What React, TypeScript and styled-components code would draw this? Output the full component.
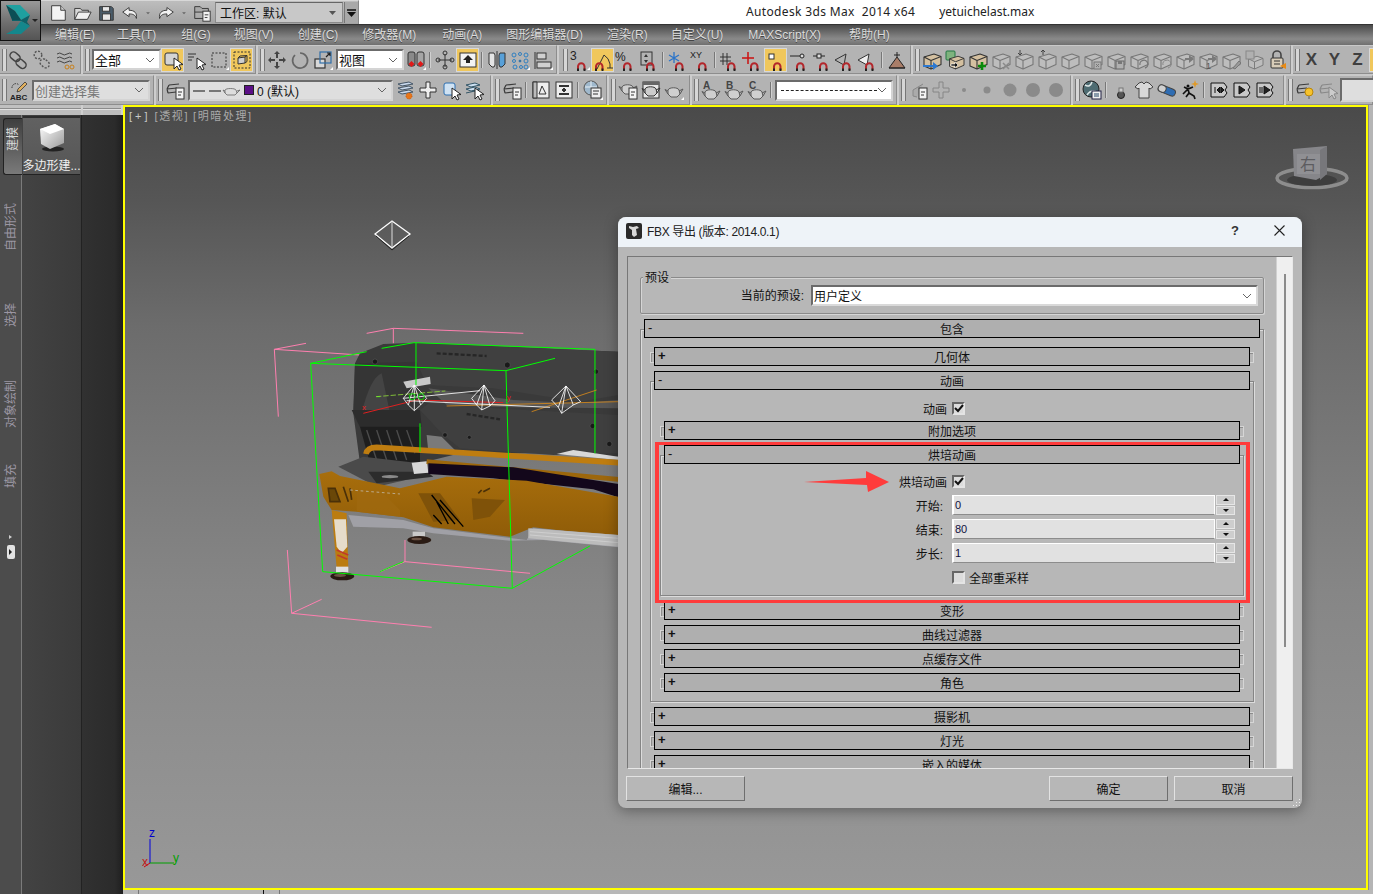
import React from 'react';
import styled, { createGlobalStyle } from 'styled-components';

const Global = createGlobalStyle`
  html, body { margin: 0; padding: 0; background: #fff; overflow: hidden; }
  * { box-sizing: border-box; }
  body { font-family: "Liberation Sans", "Noto Sans CJK SC", sans-serif; font-size: 12px; color: #111; }
`;

/* ---------- shell ---------- */
const Page = styled.div`
  position: relative; width: 1373px; height: 894px; overflow: hidden;
  display: flex; flex-direction: column; background: #c9c9c9;
`;
const TitleRow = styled.div`
  height: 24px; display: flex; align-items: flex-start; background: #fff; padding-left: 41px; flex: none;
`;
const Quick = styled.div`
  width: 318px; height: 24px; display: flex; align-items: center; padding-left: 5px;
  background: linear-gradient(#bdbdbd, #a3a3a3); border-top: 1px solid #d8d8d8; border-right: 1px solid #888;
`;
const QIcon = styled.span<{ $w?: number }>`
  width: ${p => p.$w ?? 24}px; height: 22px; display: flex; align-items: center; justify-content: center; flex: none;
`;
const WorkCombo = styled.div`
  width: 129px; height: 21px; margin-left: 1px; padding: 0 6px 0 4px; display: flex; align-items: center; justify-content: space-between;
  background: #c8c8c8; border: 1px solid #8a8a8a; border-top-color: #666; font-size: 12px; color: #111;
`;
const WorkMore = styled.div`
  width: 14px; height: 21px; margin-left: 1px; display: flex; flex-direction: column; align-items: center; justify-content: center; gap: 1px;
  background: #a9a9a9; border-left: 1px solid #777;
`;
const AppTitle = styled.div`
  margin-left: 387px; height: 24px; line-height: 24px; font-family: "Noto Sans", "Liberation Sans", sans-serif; font-size: 12px;
  color: #222; white-space: pre; letter-spacing: .35px;
`;
const FileTitle = styled(AppTitle)`
  margin-left: 24px; letter-spacing: 0;
`;
const AppButton = styled.div`
  position: absolute; left: 0; top: 0; width: 41px; height: 41px; border: 1px solid #111; z-index: 3;
  background: linear-gradient(#999, #6f6f6f 55%, #545454);
`;
const MenuBar = styled.div`
  height: 21px; flex: none; display: flex; align-items: center; padding-left: 55px;
  background: linear-gradient(#4a4a4a, #7d7d7d 55%, #8a8a8a 70%, #6f6f6f);
  border-top: 1px solid #333;
`;
const MenuItem = styled.span<{ $gap: number }>`
  margin-right: ${p => p.$gap}px; color: #dcdcdc; font-size: 12px; line-height: 20px; white-space: nowrap; text-shadow: 0 1px 0 #444;
`;
const ToolRow = styled.div<{ $h: number }>`
  height: ${p => p.$h}px; flex: none; display: flex; gap: 2px; background: #cdcdcd; overflow: hidden;
  margin-bottom: ${p => (p.$h === 29 ? 1 : 0)}px;
`;
const Group = styled.div<{ $w: number; $pad?: number }>`
  width: ${p => p.$w}px; flex: none; height: 100%; display: flex; align-items: center; padding-left: ${p => p.$pad ?? 0}px;
  background: #b3b3b3; border-right: 1px solid #8d8d8d; border-bottom: 1px solid #8d8d8d; border-top: 1px solid #c9c9c9;
`;
const Grip = styled.span`
  flex: none; width: 5px; height: 22px; margin-left: 2px;
  border-left: 1px solid #777; border-right: 1px solid #777; background: #d6d6d6;
`;
const Cell = styled.span<{ $on?: boolean; $fly?: boolean }>`
  position: relative; flex: none; width: 23px; height: 24px; display: flex; align-items: center; justify-content: center;
  background: ${p => (p.$on ? '#f0c75c' : 'transparent')};
  box-shadow: ${p => (p.$on ? 'inset 0 0 0 1px #d8d8d8' : 'none')};
  &::after {
    content: ''; display: ${p => (p.$fly ? 'block' : 'none')}; position: absolute; right: 1px; bottom: 2px;
    border-left: 3px solid transparent; border-bottom: 3px solid #fff;
  }
`;
const Sep = styled.span`
  flex: none; width: 1px; height: 16px; margin: 0 3px 0 2px; background: #777; box-shadow: 1px 0 0 #d0d0d0;
`;
const Combo = styled.div<{ $w: number; $bg?: string; $ml?: number; $c?: string }>`
  flex: none; width: ${p => p.$w}px; height: 21px; margin-left: ${p => p.$ml ?? 2}px; padding: 0 4px 0 1px; display: flex; align-items: center; justify-content: space-between;
  background: ${p => p.$bg ?? '#fff'}; color: ${p => p.$c ?? '#111'};
  border: 2px solid #d4d4d4; border-top-color: #6b6b6b; border-left-color: #6b6b6b;
  font-size: 13px; white-space: nowrap;
`;
const ComboText = styled.span`
  display: flex; align-items: center; gap: 3px; font-size: 12px;
`;
const ColorChip = styled.i`
  display: block; width: 10px; height: 10px; background: #5b0f86; border: 1px solid #222;
`;
const DashField = styled.span`
  display: block; width: 97px; height: 0; margin-left: 3px; border-top: 1px dashed #222; outline: 0;
`;
const FieldRest = styled.div`
  flex: none; width: 40px; height: 24px; margin-left: 1px; background: #dedede; border: 2px solid #d4d4d4; border-top-color: #6b6b6b; border-left-color: #6b6b6b;
`;
const AxisCell = styled.span`
  flex: none; width: 23px; text-align: center; font-family: "Liberation Sans", sans-serif; font-weight: 700; font-size: 17px; color: #3f3f3f;
`;

/* ---------- body ---------- */
const Body = styled.div`
  flex: 1; min-height: 0; display: flex;
`;
const Dock = styled.div`
  width: 123px; flex: none; display: flex; flex-direction: column; background: #2f2f2f;
`;
const DockTabs = styled.div`
  height: 10px; flex: none; display: flex; gap: 2px; background: #cfcfcf;
`;
const DockTab = styled.span<{ $w: number }>`
  display: block; width: ${p => p.$w}px; background: linear-gradient(#c0c0c0 0 3px, #8c8c8c 3px 4px, #e0e0e0 4px 5px, #bdbdbd 5px);
`;
const DockCols = styled.div`
  flex: 1; display: flex; min-height: 0;
`;
const Rail = styled.div`
  width: 22px; flex: none; padding-top: 3px; display: flex; flex-direction: column; align-items: center;
  background: #4c4c4c; border-right: 1px solid #7b7b7b;
`;
const RailActive = styled.div`
  width: 19px; height: 57px; margin-left: 3px; display: flex; align-items: flex-start; justify-content: center; padding-top: 8px;
  background: linear-gradient(#3f3f3f, #7a7a7a); border: 1px solid #222; border-right: 0; border-radius: 3px 0 0 3px;
`;
const RailLabel = styled.span<{ $top?: number; $on?: boolean }>`
  margin-top: ${p => p.$top ?? 0}px; writing-mode: vertical-rl; text-orientation: sideways; transform: rotate(180deg); font-size: 12px; line-height: 14px; white-space: nowrap;
  color: ${p => (p.$on ? '#d8d8d8' : '#9b96a3')};
`;
const RailArrow = styled.span`
  margin-top: 47px; width: 0; height: 0; border-left: 3px solid #d0d0d0; border-top: 2px solid transparent; border-bottom: 2px solid transparent;
`;
const RailButton = styled.span`
  margin-top: 6px; width: 8px; height: 14px; border-radius: 2px; background: #e2e2e2; display: flex; align-items: center; justify-content: center;
  &::before { content: ''; border-left: 3px solid #222; border-top: 3px solid transparent; border-bottom: 3px solid transparent; }
`;
const Panel = styled.div`
  width: 60px; flex: none; padding: 3px 1px 0 1px; background: linear-gradient(90deg, #434343, #3a3a3a); border-right: 1px solid #222;
`;
const PanelItem = styled.div`
  height: 57px; display: flex; flex-direction: column; align-items: center; justify-content: flex-end; padding-bottom: 1px;
  background: linear-gradient(#616161, #565656); border-bottom: 1px solid #222; box-shadow: 0 -2px 0 #2d2d2d;
  color: #f0f0f0; font-size: 12px; white-space: nowrap; overflow: hidden;
`;
const DockDark = styled.div`
  flex: 1; background: linear-gradient(90deg, #313131, #2b2b2b 80%, #1f1f1f);
`;
const Right = styled.div`
  flex: 1; min-width: 0; display: flex; flex-direction: column;
`;
const ViewRow = styled.div`
  flex: 1; min-height: 0; display: flex;
`;
const Viewport = styled.div`
  position: relative; width: 1245px; height: 785px; flex: none; border: 2px solid #ffff00; overflow: hidden;
  background: linear-gradient(#4a4a4a 0, #565656 12%, #6c6c6c 28%, #868686 62%, #989898 100%);
`;
const Gutter = styled.div`
  flex: 1; background: #b5b5b5; border-left: 1px solid #8a8a8a;
`;
const BottomStrip = styled.div`
  height: 4px; flex: none; display: flex; background: #b8b8b8;
`;
const Tick = styled.span<{ $ml: number; $c: string }>`
  width: 1px; margin-left: ${p => p.$ml}px; background: ${p => p.$c};
`;
const ViewLabel = styled.div`
  position: absolute; left: 4px; top: 1px; display: flex; gap: 4px; color: #a9a9a9; font-size: 11px; line-height: 16px; letter-spacing: 1.6px; white-space: nowrap;
`;
const LabelBright = styled.span`
  color: #c8c8c8; letter-spacing: 3px;
`;
const Scene = styled.svg`
  position: absolute; left: 0; top: 0; display: block;
`;

/* ---------- dialog ---------- */
const Dialog = styled.div`
  position: absolute; left: 493px; top: 110px; width: 684px; height: 591px; border-radius: 8px; overflow: hidden;
  display: flex; flex-direction: column; background: #b7b7b7; box-shadow: 0 3px 14px rgba(0,0,0,.35);
`;
const DlgTitle = styled.div`
  height: 30px; flex: none; display: flex; align-items: center; padding: 0 0 3px 8px; background: #eef3f8; color: #222;
  font-size: 12px;
`;
const DlgTitleText = styled.span`
  margin-left: 5px; flex: 1; letter-spacing: -.35px; font-size: 12px;
`;
const DlgHelp = styled.span`
  font-size: 13px; font-weight: 700; width: 43px; text-align: left; color: #333;
`;
const DlgClose = styled.span`
  width: 28px; display: flex;
`;
const DlgBody = styled.div`
  flex: 1; min-height: 0; padding: 9px 9px 0 9px; display: flex; flex-direction: column;
`;
const Pane = styled.div`
  height: 513px; flex: none; display: flex; border: 1px solid #e8e8e8; border-top-color: #777; border-left-color: #777; overflow: hidden;
`;
const PaneContent = styled.div`
  position: relative; width: 640px; flex: none; padding: 20px 4px 0 12px; overflow: hidden;
`;
const ScrollTrack = styled.div`
  width: 17px; margin-left: 8px; flex: none; padding: 17px 0 0 7px; background: #efefef; border-left: 1px solid #d0d0d0;
`;
const ScrollThumb = styled.div`
  width: 2px; height: 373px; background: #8b8b8b;
`;
const PresetBox = styled.fieldset`
  width: 624px; height: 37px; margin: 0 0 5px 0; padding: 0 5px 0 0; position: relative; display: flex; align-items: flex-start; justify-content: flex-end;
  border: 1px solid #8a8a8a; box-shadow: inset 1px 1px 0 #d5d5d5, 1px 1px 0 #d5d5d5; border-radius: 2px;
`;
const PresetLegend = styled.span`
  position: absolute; left: 2px; top: -7px; padding: 0 2px; background: #b7b7b7; font-size: 12px; line-height: 15px;
`;
const PresetLabel = styled.span`
  font-size: 12px; line-height: 37px; margin-right: 7px;
`;
const PresetCombo = styled.div`
  width: 447px; height: 21px; margin-top: 7px; display: flex; align-items: center; justify-content: space-between; padding: 0 4px 0 1px;
  background: #fff; border: 2px solid #d9d9d9; border-top-color: #6b6b6b; border-left-color: #6b6b6b; font-size: 12px;
`;
const Rollout = styled.div<{ $open?: boolean }>`
  position: relative; padding: 0 4px;
  & + & { margin-top: 5px; }
  &::before {
    content: ''; position: absolute; left: 0; right: 0;
    top: ${p => (p.$open ? 10 : 5)}px; bottom: ${p => (p.$open ? 0 : 3)}px;
    border: 1px solid ${p => (p.$open ? '#858585' : '#d6d6d6')};
    box-shadow: ${p => (p.$open ? 'inset 1px 1px 0 #dcdcdc, 1px 1px 0 #dcdcdc' : 'inset 1px 1px 0 #8d8d8d')};
  }
`;
const Bar = styled.div`
  position: relative; height: 19px; display: flex; align-items: center; justify-content: center;
  background: #afafaf; border: 1px solid #000; font-size: 12px; color: #111;
`;
const BarSign = styled.span<{ $plus?: boolean }>`
  position: absolute; left: 3px; top: -1px; line-height: 17px; font-size: 13px; font-weight: ${p => (p.$plus ? 700 : 400)};
`;
const RollBody = styled.div<{ $t: number; $b: number }>`
  position: relative; padding: ${p => p.$t}px 6px ${p => p.$b}px 6px;
`;
const FormRow = styled.div<{ $h?: number }>`
  height: ${p => p.$h ?? 24}px; display: flex; align-items: center;
`;
const FormLabel = styled.span<{ $w: number; $gap: number }>`
  width: ${p => p.$w}px; margin-right: ${p => p.$gap}px; text-align: right; font-size: 12px; flex: none; white-space: nowrap;
`;
const Check = styled.span`
  width: 13px; height: 13px; flex: none; display: flex; align-items: center; justify-content: center;
  background: #dcdcdc; border: 2px solid #e4e4e4; border-top-color: #666; border-left-color: #666;
`;
const CheckText = styled.span`
  margin-left: 4px; font-size: 12px;
`;
const SpinField = styled.div`
  width: 263px; height: 20px; flex: none; padding-left: 1px; display: flex; align-items: center; background: #e1e1e1;
  border: 1px solid #fff; border-bottom: 1px solid #8c8c8c; border-left-width: 2px; font-size: 11px; color: #101040;
`;
const Spinner = styled.div`
  width: 19px; height: 20px; flex: none; margin-left: 1px; display: flex; flex-direction: column; gap: 1px;
`;
const SpinBtn = styled.span<{ $down?: boolean }>`
  flex: 1; display: flex; align-items: center; justify-content: center; background: #cdcdcd; border: 1px solid #e6e6e6;
  &::before {
    content: ''; border-left: 3px solid transparent; border-right: 3px solid transparent;
    ${p => (p.$down ? 'border-top: 3px solid #111;' : 'border-bottom: 3px solid #111;')}
  }
`;
const RedBox = styled.div`
  position: absolute; left: -5px; right: -6px; top: -3px; bottom: -7px; border: 3px solid #ff3b3b; border-left-width: 4px; border-right-width: 4px; z-index: 2; pointer-events: none;
`;
const Arrow = styled.svg`
  position: absolute; left: 144px; top: 26px; display: block; z-index: 2;
`;
const DlgFooter = styled.div`
  flex: 1; display: flex; gap: 6px; padding-top: 7px; margin-left: -1px;
`;
const DlgButton = styled.div<{ $push?: boolean }>`
  width: 119px; height: 25px; display: flex; align-items: center; justify-content: center; font-size: 12px;
  margin-left: ${p => (p.$push ? 'auto' : '0')};
  border: 1px solid #6e6e6e; border-top-color: #e2e2e2; border-left-color: #e2e2e2; background: #b7b7b7;
`;
const ResizeGrip = styled.svg`
  position: absolute; right: 1px; bottom: 1px; display: block;
`;

/* ---------- drawings ---------- */
const D = '#3a3a3a';
const Mag = () => (
  <g fill="none">
    <path d="M9 21v-3.500a3.200 3.200 0 0 1 6.500 0V21" stroke="#b3262b" strokeWidth="2" />
    <path d="M9 19.500V22M15.500 19.500V22" stroke="#222" strokeWidth="2" />
  </g>
);
const Cube = ({ f = '#bdbdbd', s = '#777' }: { f?: string; s?: string }) => (
  <g fill={f} stroke={s} strokeWidth="1.100" strokeLinejoin="round">
    <path d="M3 8l10-3 7 2.500v8L10 20l-7-3z" />
    <path d="M3 8l7 3.500 10-4M10 11.500V20" fill="none" />
  </g>
);
const Pot = ({ x = 0, y = 0, c = '#5a5a5a', f = '#cfcfcf' }: { x?: number; y?: number; c?: string; f?: string }) => (
  <g transform={`translate(${x} ${y})`} stroke={c} strokeWidth="1" fill={f}>
    <path d="M5 10c1-3 10-3 11 0l1 4-3 3H8l-3-3z" />
    <path d="M16 11l4-2-3 5M5 11L2 9.500 5 14" fill="none" />
  </g>
);
const Lay = ({ c = D }: { c?: string }) => (
  <path d="M5 6l10-1M3 10l10-1M4 14l8-1M5 6L3 10M3 10l1 4" fill="none" stroke={c} strokeWidth="1.200" />
);
const Doc = () => (
  <g stroke="#333" strokeWidth="1" fill="#f2f2f2"><rect x="12" y="9" width="8" height="11" /><path d="M14 13h4M14 16h3" /></g>
);
const arrowCursor = <path d="M12 9l0 11 3-3 2 4 2-1-2-4 4-.5z" fill="#fff" stroke="#222" strokeWidth="1" />;

const icons: Record<string, React.ReactNode> = {
  file: <g fill="#f4f4f4" stroke="#333"><path d="M4 3h10l5 5v11H4z" /><path d="M14 3v5h5" fill="#ccc" /></g>,
  open: <g stroke="#333" fill="#d8d8d8"><path d="M3 18V6h6l2 2h7v2" /><path d="M3 18l4-8h14l-4 8z" fill="#f0f0f0" /></g>,
  save: <g stroke="#333" fill="#4a5c6a"><path d="M4 4h13l2 2v13H4z" /><rect x="7" y="4" width="8" height="5" fill="#e8e8e8" /><rect x="7" y="12" width="9" height="7" fill="#e8e8e8" /></g>,
  undo: <path d="M10 5L3 10l7 5v-3c4 0 7 1 8 5 1-6-2-9-8-9z" fill="#f2f2f2" stroke="#333" />,
  redo: <path d="M12 5l7 5-7 5v-3c-4 0-7 1-8 5-1-6 2-9 8-9z" fill="#f2f2f2" stroke="#333" />,
  drop: <path d="M8 10h6l-3 3z" fill="#666" />,
  proj: <g stroke="#333"><path d="M3 4h6l2 2h7v4H3z" fill="#aaa" /><Doc /><path d="M3 10v7h9" fill="none" /></g>,
  link: <g fill="none" stroke="#444" strokeWidth="1.500"><rect x="2" y="4" width="11" height="7" rx="3.500" transform="rotate(40 7 7)" /><rect x="8" y="11" width="11" height="7" rx="3.500" transform="rotate(40 13 14)" /></g>,
  unlink: <g fill="none" stroke="#555" strokeWidth="1.400" strokeDasharray="2 1.500"><circle cx="7" cy="6" r="3.800" /><rect x="9" y="11" width="10" height="7" rx="3.500" transform="rotate(40 14 14)" /></g>,
  bind: <g fill="none"><path d="M3 5q3-2 5 0t5 0 5 0M3 9q3-2 5 0t5 0 5 0M3 13q3-2 5 0t5 0 5 0" stroke="#444" /><circle cx="13" cy="18" r="2" stroke="#c9801a" /><circle cx="18" cy="18" r="2" stroke="#c9801a" /></g>,
  select: <g><rect x="3" y="4" width="13" height="12" rx="2" fill="#d4d4d4" stroke="#333" />{arrowCursor}</g>,
  byname: <g><path d="M3 5h8M3 8h6M3 11h4" stroke="#333" />{arrowCursor}</g>,
  rect: <rect x="4" y="4" width="14" height="14" fill="none" stroke="#333" strokeDasharray="2 1.500" />,
  window: <g fill="none" stroke="#333"><rect x="3" y="3" width="16" height="16" strokeDasharray="2 1.500" /><path d="M7 9l7-1v6l-7 1z" fill="#cfcfcf" /><path d="M7 9l2-2 7-.5v6L14 14M14 8l2-1.500" /></g>,
  move: <g fill="#444"><path d="M11 2l3 3h-2v4h-2V5H8zM11 20l3-3h-2v-4h-2v4H8zM2 11l3-3v2h4v2H5v2zM20 11l-3-3v2h-4v2h4v2z" /></g>,
  rotate: <path d="M6 6a7.500 7.500 0 1 0 5-2" fill="none" stroke="#666" strokeWidth="1.700" />,
  scale: <g fill="none" stroke="#2f6ea8" strokeWidth="1.200"><rect x="3" y="10" width="10" height="9" fill="#d8d8d8" stroke="#333" /><rect x="8" y="3" width="11" height="11" /><path d="M14 8l4-4M15 4h3v3" stroke="#222" /></g>,
  pivot: <g stroke="#333"><rect x="3" y="3" width="7" height="14" rx="2" fill="#8a8a8a" /><rect x="12" y="3" width="7" height="14" rx="2" fill="#a5a5a5" /><path d="M6.500 12l3 3-3 3-3-3z" fill="#e01818" stroke="none" /><path d="M15.500 12l3 3-3 3-3-3z" fill="#e01818" stroke="none" /></g>,
  axis: <g fill="none" stroke="#333"><path d="M11 5v13M4 11h14" /><circle cx="11" cy="4" r="2" /><circle cx="4" cy="11" r="2" /><circle cx="18" cy="11" r="2" /><circle cx="11" cy="18" r="2" /></g>,
  manip: <g><rect x="3" y="4" width="16" height="14" fill="#f3f3f3" stroke="#333" /><path d="M11 6l5 5h-3v3H9v-3H6z" fill="#222" /></g>,
  mirror: <g stroke="#333" fill="#e4e4e4"><path d="M3 4h5l1 2v10l-1 2H6l-3-3z" /><path d="M19 4h-5l-1 2v10l1 2h2l3-3z" fill="#58a0d8" /><path d="M11 2v18" /></g>,
  array: <g fill="none" stroke="#2f7fc0"><circle cx="5" cy="6" r="2" /><circle cx="11" cy="5" r="1.500" /><circle cx="17" cy="6" r="2" /><circle cx="5" cy="12" r="1.500" /><circle cx="11" cy="12" r="1" fill="#333" /><circle cx="17" cy="12" r="2" /><circle cx="6" cy="18" r="2" /><circle cx="12" cy="18" r="1.500" /><circle cx="17" cy="18" r="2" /></g>,
  align: <g stroke="#333" fill="#d0d0d0"><path d="M3 3v17" /><rect x="5" y="4" width="9" height="6" /><rect x="5" y="13" width="14" height="6" /></g>,
  s3: <g><text x="1" y="11" fontSize="12" fill="#222">3</text><Mag /></g>,
  sang: <g><path d="M5 20L12 6M12 6q5 3 6 9" fill="none" stroke="#333" /><path d="M15 19h6M18 15v4" stroke="#333" /><g transform="translate(-5 0)"><Mag /></g></g>,
  spct: <g><text x="0" y="12" fontSize="12" fill="#222">%</text><Mag /></g>,
  sspin: <g><rect x="3" y="3" width="11" height="13" fill="none" stroke="#333" /><path d="M8 5l2 3H6zM8 14l-2-3h4z" fill="#333" /><Mag /></g>,
  snow: <g><path d="M7 3v11M2 6l10 6M12 6L2 12" stroke="#2b74c9" strokeWidth="1.300" /><Mag /></g>,
  xy: <g><text x="0" y="9" fontSize="9" fill="#222">XY</text><Mag /></g>,
  grid: <g><path d="M1 8h11M1 12h11M4 4v12M8 4v12" stroke="#333" /><Mag /></g>,
  cross: <g><path d="M0 9h12M6 3v12" stroke="#c11" strokeWidth="1.500" /><Mag /></g>,
  point: <g><rect x="4" y="5" width="5" height="5" fill="#fff" stroke="#333" /><Mag /></g>,
  line1: <g><path d="M2 7h10" stroke="#222" /><circle cx="14" cy="7" r="2" fill="#ddd" stroke="#222" /><Mag /></g>,
  line2: <g><path d="M2 7h12" stroke="#222" /><rect x="6" y="5" width="4" height="4" fill="#ddd" stroke="#222" /><Mag /></g>,
  tri1: <g><path d="M1 11l11-6-2 11z" fill="none" stroke="#333" /><Mag /></g>,
  tri2: <g><path d="M1 11l11-6-2 11z" fill="#eee" stroke="#333" /><Mag /></g>,
  pyr: <g stroke="#222"><path d="M11 3v5M8 6h6" /><path d="M11 8l8 11H3z" fill="#a97d68" /><path d="M3 19h16" /></g>,
  c1: <g><Cube f="#d4c0a0" s="#333" /><path d="M2 18h10v-3l5 4-5 4v-3H2z" fill="#2d78cf" transform="translate(0 -2)" /></g>,
  c2: <g><rect x="2" y="2" width="9" height="9" rx="1" fill="#7eb37e" stroke="#274" /><g transform="translate(3 3) scale(.85)"><Cube f="#d4c0a0" s="#333" /></g><path d="M7 15h4v-2l3 3-3 3v-2H7z" fill="#111" stroke="#fff" strokeWidth=".6" /></g>,
  c3: <g><Cube f="#d4c0a0" s="#333" /><path d="M15 13v8M11 17h8" stroke="#0a8a0a" strokeWidth="2.600" /></g>,
  c4: <g><Cube /><path d="M13 14l6 6M19 14l-6 6" stroke="#8a8a8a" strokeWidth="1.500" /></g>,
  c5: <g><Cube /><path d="M7 1v5M5 4l2 2 2-2" fill="none" stroke="#444" /></g>,
  c6: <g><Cube /><path d="M7 6V1M5 3l2-2 2 2" fill="none" stroke="#444" /></g>,
  c7: <Cube />,
  c8: <g><Cube /><rect x="12" y="13" width="7" height="7" fill="#b0b0b0" stroke="#777" /><path d="M14 15l3 3M17 15l-3 3" stroke="#777" /></g>,
  c9: <g><Cube /><rect x="11" y="12" width="8" height="8" fill="#b0b0b0" stroke="#666" /><rect x="13" y="12" width="4" height="3" fill="#777" /></g>,
  c10: <g><Cube /><path d="M12 16a4 4 0 1 1 5 3" fill="none" stroke="#777" strokeWidth="1.300" /></g>,
  c11: <g><Cube /><path d="M12 16a4 4 0 1 1 5 3" fill="none" stroke="#888" /></g>,
  c12: <g><Cube /><path d="M11 9h4V6l5 4-5 4v-3h-4z" fill="#7a7a7a" /></g>,
  c13: <g><Cube /><path d="M11 9h4V6l5 4-5 4v-3h-4z" fill="#7a7a7a" /><text x="9" y="20" fontSize="9" fill="#555">1</text></g>,
  c14: <g><Cube /><path d="M13 19l6-7 2 2-6 6z" fill="#999" stroke="#777" /></g>,
  c15: <g><g transform="translate(3 3) scale(.85)"><Cube /></g><rect x="3" y="2" width="8" height="8" fill="#b0b0b0" stroke="#888" /></g>,
  lock: <g><rect x="5" y="9" width="12" height="10" rx="1" fill="#d8cdb9" stroke="#333" /><path d="M7 9V6a4 4 0 0 1 8 0v3" fill="none" stroke="#444" strokeWidth="1.600" /><path d="M8 12h6M8 15h6" stroke="#333" /><path d="M14 17l6-3v6z" fill="#e88a14" /></g>,
  abc: <g><path d="M4 9a4 4 0 0 1 7-3" fill="none" stroke="#333" strokeDasharray="1.500 1" /><path d="M10 10l7-7 2 2-7 7-3 1z" fill="#e0b060" stroke="#333" strokeWidth=".8" /><text x="2" y="21" fontSize="8" fontWeight="700" fill="#222">ABC</text></g>,
  lay: <g><Lay /><Doc /></g>,
  layo: <g fill="#c8d8ec" stroke="#456"><path d="M4 5l11-2 4 2-11 2zM4 9l11-2 4 2-11 2zM4 13l11-2 4 2-11 2z" /><circle cx="15" cy="17" r="3" fill="#e8761a" stroke="#c3560a" strokeDasharray="1 1" /></g>,
  plus: <path d="M9 3h4v6h6v4h-6v6H9v-6H3V9h6z" fill="#eee" stroke="#333" />,
  cubecur: <g><rect x="4" y="4" width="11" height="12" rx="2" fill="#cfe2f3" stroke="#2d6fb0" />{arrowCursor}</g>,
  laycur: <g><path d="M3 6l9-2 5 2-9 2zM3 10l9-2 5 2-9 2zM3 14l9-2" fill="#cfe2f3" stroke="#356" />{arrowCursor}</g>,
  r1: <g stroke="#333" fill="#eee"><rect x="3" y="3" width="16" height="16" /><path d="M3 3h4v16H3z" fill="#bbb" /><path d="M9 15l3-8 4 8z" fill="none" /></g>,
  r2: <g stroke="#333" fill="#eee"><rect x="3" y="3" width="16" height="16" /><path d="M6 7h10M6 15h10" strokeWidth="2" /><path d="M11 9l2 2h-4zM11 13l-2-2h4z" fill="#333" /></g>,
  r3: <g><circle cx="9" cy="9" r="7" fill="#9fb8cc" stroke="#555" /><path d="M3 8h12M9 2v14" stroke="#e6eef4" /><rect x="9" y="9" width="10" height="10" fill="#eee" stroke="#333" /><path d="M11 12h6M11 15h5" stroke="#333" /></g>,
  p1: <g><Pot y={-2} /><Doc /></g>,
  p2: <g><rect x="3" y="3" width="16" height="16" fill="#e8e8e8" stroke="#333" /><rect x="3" y="3" width="16" height="3" fill="#666" /><Pot x={0} y={0} c="#333" f="#ccc" /></g>,
  p3: <Pot x={0} y={1} />,
  pa: <g><Pot y={3} /><text x="3" y="10" fontSize="10" fontWeight="700" fill="#444">A</text></g>,
  pb: <g><Pot y={3} /><text x="3" y="10" fontSize="10" fontWeight="700" fill="#444">B</text></g>,
  pc: <g><Pot y={3} /><text x="3" y="10" fontSize="10" fontWeight="700" fill="#444">C</text></g>,
  q1: <g><path d="M16 5L6 11v6l4 1" fill="#aaa" stroke="#888" /><Doc /></g>,
  q2: <path d="M9 3h4v6h6v4h-6v6H9v-6H3V9h6z" fill="none" stroke="#868686" />,
  d1: <circle cx="11" cy="11" r="2" fill="#8b8b8b" />,
  d2: <circle cx="11" cy="11" r="3.500" fill="#8b8b8b" />,
  d3: <circle cx="11" cy="11" r="6.500" fill="#8c8c8c" />,
  d4: <circle cx="11" cy="11" r="7" fill="#8a8a8a" />,
  globe: <g><circle cx="10" cy="10" r="8" fill="#4e6c72" stroke="#222" /><path d="M4 6q5 3 7-3M6 16q4-6 10-3" fill="none" stroke="#e0e8e8" strokeWidth="1.600" /><rect x="11" y="12" width="9" height="8" fill="#f0f0f0" stroke="#224" /><path d="M13 15h5M13 17h5" stroke="#246" /></g>,
  lamp: <g><circle cx="11" cy="16" r="3.500" fill="#555" stroke="#222" /><rect x="9" y="9" width="4" height="4" fill="#ccc" stroke="#777" /></g>,
  shirt: <path d="M6 4l3-1 2 2 2-2 3 1 4 4-3 2-1-1v10H6V9l-1 1-3-2z" fill="#d8d8d8" stroke="#444" />,
  pill: <g transform="rotate(22 11 11)"><rect x="2" y="8" width="18" height="7" rx="3.500" fill="#2f6db3" stroke="#444" /><rect x="2" y="8" width="8" height="7" rx="3.500" fill="#d0d0d0" stroke="#444" /></g>,
  runner: <g><path d="M5 8l4 2 5-2M9 10l1 4-3 4M10 14l5 3 1 3M9 10l-5 5" fill="none" stroke="#111" strokeWidth="1.700" /><circle cx="9" cy="7" r="1.500" fill="#111" /><path d="M16 1l1 3 3 1-3 1-1 3-1-3-3-1 3-1z" fill="#e09a28" /></g>,
  tri3: <g stroke="#111" fill="#c8c8c8"><path d="M3 4h13l3 4-2 3 2 3-3 4H3z" /><path d="M7 8v6M12 8l-3 3 3 3zM13 8l3 3-3 3z" fill="#222" /></g>,
  tri4: <g stroke="#111" fill="#c8c8c8"><path d="M3 4h13l3 4-2 3 2 3-3 4H3z" /><path d="M8 7l6 4-6 4z" fill="#222" /></g>,
  tri5: <g stroke="#111" fill="#c8c8c8"><path d="M3 4h13l3 4-2 3 2 3-3 4H3z" /><path d="M6 8v6M8 8v6M10 7l6 4-6 4z" fill="#222" /></g>,
  bulb: <g><Lay /><circle cx="15" cy="13" r="4" fill="#f6c22c" stroke="#b8860b" /><path d="M14 17h2v3h-2z" fill="#888" /></g>,
  lcur: <g><Lay c="#888" /><path d="M12 8l0 11 3-3 2 4 2-1-2-4 4-.5z" fill="#ccc" stroke="#888" /></g>,
};

const Icon = ({ n, size = 22 }: { n: string; size?: number }) => (
  <svg width={size} height={size} viewBox="0 0 22 22" style={{ display: 'block', overflow: 'visible' }} fontFamily="Liberation Sans, sans-serif">
    {icons[n]}
  </svg>
);
const Chev = () => (
  <svg width="10" height="6" viewBox="0 0 10 6" style={{ display: 'block', flex: 'none' }}>
    <path d="M1 1l4 4 4-4" fill="none" stroke="#666" />
  </svg>
);

/** list: names split by spaces; "|" is a divider, "name*" is a lit button, "name^" has a flyout corner */
const Tools = ({ list }: { list: string }) => (
  <>
    {list.split(' ').map((t, i) => {
      if (t === '|') return <Sep key={i} />;
      const on = t.includes('*');
      const fly = t.includes('^');
      return (
        <Cell key={i} $on={on} $fly={fly}>
          <Icon n={t.replace(/[*^]/g, '')} />
        </Cell>
      );
    })}
  </>
);

const fan = (a: [number, number], pts: [number, number][]) =>
  pts.map(p => `M${a[0]} ${a[1]}L${p[0]} ${p[1]}`).join('') +
  `M${pts.map(p => `${p[0]} ${p[1]}`).join('L')}`;

const SceneArt = () => (
  <Scene width="1241" height="781" viewBox="125 107 1241 781">
    <defs>
      <linearGradient id="orange" x1="0" y1="0" x2="0" y2="1">
        <stop offset="0" stopColor="#a86e0c" />
        <stop offset="1" stopColor="#8f5c08" />
      </linearGradient>
    </defs>
    <g transform="translate(260 320) scale(.3333)">
      <g fill="none" stroke="#ff80b0" strokeWidth="3">
        <path d="M43 88L138 70M43 88L300 105M43 88L55 290M320 40L400 25L790 40M400 25V70M82 690L95 880L185 838M95 880L515 922M360 755L435 725L810 760M435 725V660" />
      </g>
      {/* boom and tower: one dark mass, then its parts */}
      <path d="M285 130L300 100L370 72L470 68L1075 95V410L880 400L600 400L480 430L300 430L280 280Z" fill="#3a3a3a" />
      <path d="M470 70L1075 95V225L960 245L700 205L500 195L470 125Z" fill="#404040" />
      <path d="M285 130L470 125L470 280H280Z" fill="#353535" />
      <path d="M305 280Q330 175 365 160L390 280Z" fill="#444" />
      <path d="M275 270L480 270L485 320L300 322Z" fill="#2c2c2c" />
      <path d="M480 270L520 240L700 265L1075 285V400L880 405L600 385L550 345Z" fill="#3f3f3f" />
      <path d="M505 205L760 240L950 250L1075 240V265L760 262L560 255Z" fill="#565656" />
      <path d="M500 345L545 350L590 395L505 395Z" fill="#7a7a7a" />
      <path d="M300 320H480V430H330Z" fill="#1e1e1e" />
      <path d="M320 330L350 420M350 330L380 420M380 330L410 420M410 330L440 420M440 330L465 400" stroke="#4c4c4c" strokeWidth="4" />
      <path d="M530 100L680 108M620 282L720 298" stroke="#262626" strokeWidth="7" strokeDasharray="12 6" />
      <g fill="#191919" stroke="#555" strokeWidth="2">
        <circle cx="742" cy="135" r="9" /><circle cx="1008" cy="155" r="8" /><circle cx="998" cy="318" r="8" /><circle cx="1048" cy="372" r="8" /><circle cx="628" cy="352" r="6" /><circle cx="555" cy="345" r="7" /><circle cx="345" cy="125" r="8" />
      </g>
      <path d="M235 440L310 410L480 430L480 470L350 500Z" fill="#4a4a4a" />
      <path d="M325 455H500L520 470L350 490Z" fill="#2c2c2c" />
      <ellipse cx="390" cy="470" rx="25" ry="5" fill="#8a8a8a" />
      <path d="M455 428L500 424L505 458L462 462Z" fill="#d8d8d8" />
      <path d="M430 185L510 170L512 192L440 205Z" fill="#c9c9c9" />
      <path d="M890 402L940 390L1075 410V420Z" fill="#d8d8d8" />
      {/* orange pipes and chassis */}
      <path d="M318 402Q322 382 350 382L1075 428" fill="none" stroke="#bf7d10" strokeWidth="17" />
      <path d="M500 425L1075 478" fill="none" stroke="#9d670c" strokeWidth="14" />
      <path d="M505 430L760 442L1075 492V532L1000 508L700 475L505 462Z" fill="#13071b" />
      <path d="M178 462L215 454L240 468L420 505L560 470L800 482L1075 530V652L820 622L750 650L520 622L430 592L290 575L215 570L190 530Z" fill="url(#orange)" />
      <path d="M475 520L540 520L600 600L520 605ZM635 535L735 540L690 590L640 600Z" fill="#7f5209" />
      <path d="M515 525L585 612M530 545L565 612M520 585L545 612M540 540L610 620" stroke="#000" strokeWidth="4" />
      <path d="M205 505L225 505L240 545L210 545ZM250 500L265 545M270 505L275 540M655 520L665 510M670 515L690 505" stroke="#4a3008" strokeWidth="5" fill="#6a4708" />
      <path d="M290 575L420 590V570L360 510H290Z" fill="#a06a0f" opacity=".7" />
      <path d="M270 510L420 522" stroke="#c9c9c9" strokeWidth="2" strokeDasharray="8 8" />
      <path d="M265 585L430 600L520 625L800 660L820 625L1075 645V682L850 660L750 662L520 640L430 625L280 620Z" fill="#a0a0a6" />
      <path d="M805 625L1075 645V680L805 655Z" fill="#bcbcbc" />
      <path d="M810 635L1075 655M810 645L1075 668" stroke="#d8d8d8" strokeWidth="2" />
      <path d="M215 570L260 580L265 745L230 745Z" fill="#bb7c10" />
      <path d="M222 598L258 598L262 680L245 700L230 680Z" fill="#e6dccb" />
      <path d="M230 690L265 705M232 705L262 718" stroke="#c13a2a" strokeWidth="5" />
      <path d="M228 740H265V760H228Z" fill="#e0e0e0" />
      <ellipse cx="247" cy="769" rx="36" ry="12" fill="#2a1b14" />
      <ellipse cx="240" cy="766" rx="18" ry="5" fill="#6b5345" />
      <path d="M458 635H495V655H458Z" fill="#c9c9c9" />
      <ellipse cx="478" cy="660" rx="36" ry="12" fill="#2a1b14" />
      <ellipse cx="470" cy="657" rx="16" ry="4" fill="#6b5345" />
      {/* green box */}
      <g fill="none" stroke="#00ff00" strokeWidth="3">
        <path d="M152 130L738 152L757 805L188 755ZM152 130L320 95M365 85L462 68L1005 88V400M738 152L885 115M757 805L990 678M360 755L430 725M468 68V195M480 310V395M350 230H360" />
      </g>
      <path d="M348 230L556 213" fill="none" stroke="#8fd838" strokeWidth="2.500" strokeDasharray="16 6" />
      {/* axes and bones */}
      <g fill="none" strokeWidth="3">
        <path d="M310 280L470 240L730 248" stroke="#e02020" />
        <path d="M815 275L1010 210M560 258L1075 245" stroke="#d98a1a" strokeWidth="2.500" />
      </g>
      <g fill="none" stroke="#fff" strokeWidth="2.500">
        <path d={fan([463, 195], [[430, 235], [445, 255], [463, 272], [482, 255], [500, 235]])} />
        <path d={fan([672, 195], [[635, 235], [650, 255], [665, 270], [690, 258], [705, 242]])} />
        <path d={fan([918, 198], [[875, 240], [895, 262], [905, 280], [940, 255], [962, 245]])} />
        <path d="M430 235L660 212M440 242L870 262" />
      </g>
      <g fill="none" stroke="#00d000" strokeWidth="3"><circle cx="457" cy="230" r="9" /><circle cx="484" cy="230" r="9" /></g>
      <text x="306" y="270" fill="#e02020" fontSize="24" fontFamily="Liberation Sans, sans-serif">x</text>
      <text x="740" y="240" fill="#e02020" fontSize="24" fontFamily="Liberation Sans, sans-serif">y</text>
    </g>
    {/* home gizmo */}
    <g fill="none">
      <path d="M375 234L392 221L410 234L392 248Z" stroke="#fff" strokeWidth="1.300" />
      <path d="M392 221V248" stroke="#ddd" />
      <path d="M376 235L392 249L409 235" stroke="#111" strokeWidth=".8" transform="translate(0 1)" />
    </g>
    {/* axis tripod */}
    <g fill="none" strokeWidth="1">
      <path d="M150 839V863" stroke="#0000dd" />
      <path d="M150 863H174" stroke="#00a000" />
      <path d="M150 863L144 867" stroke="#d00000" />
    </g>
    <g fontFamily="Liberation Sans, sans-serif" fontSize="12">
      <text x="149" y="837" fill="#0000cc">z</text>
      <text x="173" y="862" fill="#00a000">y</text>
      <text x="142" y="866" fill="#c01818">x</text>
    </g>
    {/* view cube */}
    <g>
      <ellipse cx="1312" cy="178" rx="35" ry="9.500" fill="none" stroke="#8d8d8d" strokeWidth="3.500" />
      <ellipse cx="1312" cy="180" rx="25" ry="6" fill="#3e3e3e" />
      <path d="M1293 149L1327 146L1327 174L1316 180L1294 176Z" fill="#86868a" />
      <path d="M1297 154H1320V174H1297Z" fill="#909094" />
      <path d="M1320 150L1327 146V174L1320 180Z" fill="#77777b" />
      <text x="1300" y="170" fontSize="16" fill="#5c5c60" fontFamily="Noto Sans CJK SC, sans-serif">右</text>
    </g>
  </Scene>
);

const Row = ({ label, children, w = 273, gap = 9, h }: { label: string; children: React.ReactNode; w?: number; gap?: number; h?: number }) => (
  <FormRow $h={h}>
    <FormLabel $w={w} $gap={gap}>{label}</FormLabel>
    {children}
  </FormRow>
);
const Tick3 = () => (
  <svg width="10" height="9" viewBox="0 0 10 9" style={{ display: 'block', flex: 'none' }}>
    <path d="M1 4l3 3 5-6" fill="none" stroke="#111" strokeWidth="2" />
  </svg>
);
const SpinRow = ({ label, value }: { label: string; value: string }) => (
  <Row label={label}>
    <SpinField>{value}</SpinField>
    <Spinner><SpinBtn /><SpinBtn $down /></Spinner>
  </Row>
);
const Closed = ({ title }: { title: string }) => (
  <Rollout>
    <Bar><BarSign $plus>+</BarSign>{title}</Bar>
  </Rollout>
);

const menus: [string, number][] = [
  ['编辑(E)', 22], ['工具(T)', 25], ['组(G)', 23], ['视图(V)', 24], ['创建(C)', 24], ['修改器(M)', 26],
  ['动画(A)', 24], ['图形编辑器(D)', 24], ['渲染(R)', 23], ['自定义(U)', 25], ['MAXScript(X)', 28], ['帮助(H)', 0],
];

export default function App() {
  return (
    <Page>
      <Global />
      <AppButton>
        <svg width="39" height="39" viewBox="0 0 39 39" style={{ display: 'block' }}>
          <path d="M5 4H19L29 14L20 19L14 10Z" fill="#1fa0a0" />
          <path d="M5 4L14 10L20 19H11Z" fill="#0c4f55" />
          <path d="M11 19H20L29 14L26 21L29 25L20 20H11Z" fill="#0e6168" />
          <path d="M5 33H20L29 25L20 20L14 28Z" fill="#14878c" />
          <path d="M31 18h6l-3 3z" fill="#222" />
        </svg>
      </AppButton>
      <TitleRow>
        <Quick>
          <QIcon><Icon n="file" size={20} /></QIcon>
          <QIcon><Icon n="open" size={20} /></QIcon>
          <QIcon><Icon n="save" size={20} /></QIcon>
          <QIcon><Icon n="undo" size={20} /></QIcon>
          <QIcon $w={12}><Icon n="drop" size={14} /></QIcon>
          <QIcon><Icon n="redo" size={20} /></QIcon>
          <QIcon $w={12}><Icon n="drop" size={14} /></QIcon>
          <QIcon><Icon n="proj" size={20} /></QIcon>
          <WorkCombo>工作区: 默认<svg width="7" height="4" viewBox="0 0 7 4" style={{ display: 'block' }}><path d="M0 0h7L3.500 4z" fill="#555" /></svg></WorkCombo>
          <WorkMore>
            <svg width="9" height="8" viewBox="0 0 9 8" style={{ display: 'block' }}><path d="M0 1h9" stroke="#111" strokeWidth="1.500" /><path d="M0 3h9L4.500 8z" fill="#111" /></svg>
          </WorkMore>
        </Quick>
        <AppTitle>Autodesk 3ds Max  2014 x64</AppTitle>
        <FileTitle>yetuichelast.max</FileTitle>
      </TitleRow>
      <MenuBar>
        {menus.map(([m, g]) => (
          <MenuItem key={m} $gap={g}>{m}</MenuItem>
        ))}
      </MenuBar>
      <ToolRow $h={29}>
        <Group $w={81}><Grip /><Tools list="link unlink bind" /></Group>
        <Group $w={173}>
          <Grip />
          <Combo $w={69}><span>全部</span><Chev /></Combo>
          <Tools list="select* byname rect^ window*" />
        </Group>
        <Group $w={299}>
          <Grip />
          <Tools list="move rotate scale^" />
          <Combo $w={68}><span>视图</span><Chev /></Combo>
          <Tools list="pivot^ | axis manip* | mirror array^ align^" />
        </Group>
        <Group $w={352} $pad={2}>
          <Grip />
          <Tools list="s3^ sang* spct sspin | snow xy | grid cross point* line1 line2 tri1 tri2 | pyr" />
        </Group>
        <Group $w={378}>
          <Grip />
          <Tools list="c1 c2 c3 c4 c5 c6 c7 c8 c9 c10 c11 c12 c13 c14 c15 lock" />
        </Group>
        <Group $w={82}>
          <Grip />
          <AxisCell>X</AxisCell><AxisCell>Y</AxisCell><AxisCell>Z</AxisCell>
          <Cell $on />
        </Group>
      </ToolRow>
      <ToolRow $h={30}>
        <Group $w={154}>
          <Grip />
          <Tools list="abc" />
          <Combo $w={118} $bg="#dedede" $c="#777"><span>创建选择集</span><Chev /></Combo>
        </Group>
        <Group $w={335}>
          <Grip />
          <Tools list="lay" />
          <Combo $w={205} $bg="#dedede">
            <ComboText>
              <svg width="50" height="14" viewBox="0 0 50 14" style={{ display: 'block' }}>
                <path d="M2 8h12M18 8h12" stroke="#777" strokeWidth="2" />
                <path d="M34 7c1-2 10-2 11 0l1 3-2 2h-8l-2-2zM34 8l-2-1 2 3M46 8l3-1-3 3" fill="#ddd" stroke="#666" strokeWidth=".8" />
              </svg>
              <ColorChip />0 (默认)
            </ComboText>
            <Chev />
          </Combo>
          <Tools list="layo plus cubecur laycur" />
        </Group>
        <Group $w={114}><Grip /><Tools list="lay | r1 r2 | r3^" /></Group>
        <Group $w={81}><Grip /><Tools list="p1 p2 p3^" /></Group>
        <Group $w={205}>
          <Grip />
          <Tools list="pa pb pc |" />
          <Combo $w={118} $ml={1}><DashField /><Chev /></Combo>
        </Group>
        <Group $w={172}><Grip /><Tools list="q1 q2 d1 d2 d3 d4 d4" /></Group>
        <Group $w={211}><Grip /><Tools list="globe | lamp shirt pill runner | tri3 tri4 tri5" /></Group>
        <Group $w={87}>
          <Grip />
          <Tools list="bulb lcur" />
          <FieldRest />
        </Group>
      </ToolRow>
      <Body>
        <Dock>
          <DockTabs><DockTab $w={81} /><DockTab $w={38} /></DockTabs>
          <DockCols>
            <Rail>
              <RailActive><RailLabel $on>建模</RailLabel></RailActive>
              <RailLabel $top={28}>自由形式</RailLabel>
              <RailLabel $top={52}>选择</RailLabel>
              <RailLabel $top={53}>对象绘制</RailLabel>
              <RailLabel $top={36}>填充</RailLabel>
              <RailArrow />
              <RailButton />
            </Rail>
            <Panel>
              <PanelItem>
                <svg width="34" height="34" viewBox="0 0 34 34" style={{ display: 'block', marginBottom: 2 }}>
                  <defs><linearGradient id="cubeside2" x1="0" y1="0" x2="1" y2="1"><stop offset="0" stopColor="#fff" /><stop offset="1" stopColor="#9a9a9a" /></linearGradient></defs>
                  <ellipse cx="18" cy="29" rx="11" ry="2.500" fill="#222" />
                  <path d="M5 9L20 4L29 9V23L15 29L6 24Z" fill="url(#cubeside2)" />
                  <path d="M5 9L20 4L29 9L15 14Z" fill="#fff" />
                </svg>
                多边形建...
              </PanelItem>
            </Panel>
            <DockDark />
          </DockCols>
        </Dock>
        <Right>
          <ViewRow>
            <Viewport>
              <SceneArt />
              <ViewLabel>
                <LabelBright>[+]</LabelBright>
                <span>[透视]</span>
                <span>[明暗处理]</span>
              </ViewLabel>
              <Dialog>
                <DlgTitle>
                  <svg width="16" height="16" viewBox="0 0 16 16" style={{ display: 'block', flex: 'none' }}>
                    <rect width="16" height="16" rx="2" fill="#2a2a2a" />
                    <path d="M3 3l4 1 4-1 2 2-3 1 1 6-3 2-2-2V7L3 5z" fill="#d8d8d8" />
                  </svg>
                  <DlgTitleText>FBX 导出 (版本: 2014.0.1)</DlgTitleText>
                  <DlgHelp>?</DlgHelp>
                  <DlgClose>
                    <svg width="11" height="11" viewBox="0 0 11 11" style={{ display: 'block' }}>
                      <path d="M.500.500l10 10M10.500.500l-10 10" stroke="#222" strokeWidth="1.100" />
                    </svg>
                  </DlgClose>
                </DlgTitle>
                <DlgBody>
                  <Pane>
                    <PaneContent>
                      <PresetBox>
                        <PresetLegend>预设</PresetLegend>
                        <PresetLabel>当前的预设:</PresetLabel>
                        <PresetCombo>用户定义<Chev /></PresetCombo>
                      </PresetBox>
                      <Rollout $open>
                        <Bar><BarSign>-</BarSign>包含</Bar>
                        <RollBody $t={9} $b={0}>
                          <Closed title="几何体" />
                          <Rollout $open>
                            <Bar><BarSign>-</BarSign>动画</Bar>
                            <RollBody $t={6} $b={10}>
                              <Row label="动画" w={287} gap={5} h={25}><Check><Tick3 /></Check></Row>
                              <Closed title="附加选项" />
                              <Rollout $open>
                                <RedBox />
                                <Arrow width="86" height="22" viewBox="0 0 86 22">
                                  <path d="M0 11L62 7V0L85 11L64 21L63 14Z" fill="#ff3b3b" />
                                </Arrow>
                                <Bar><BarSign>-</BarSign>烘培动画</Bar>
                                <RollBody $t={6} $b={7}>
                                  <Row label="烘培动画" w={277} gap={5} h={23}><Check><Tick3 /></Check></Row>
                                  <SpinRow label="开始:" value="0" />
                                  <SpinRow label="结束:" value="80" />
                                  <SpinRow label="步长:" value="1" />
                                  <Row label="" w={277} gap={5}><Check /><CheckText>全部重采样</CheckText></Row>
                                </RollBody>
                              </Rollout>
                              <Closed title="变形" />
                              <Closed title="曲线过滤器" />
                              <Closed title="点缓存文件" />
                              <Closed title="角色" />
                            </RollBody>
                          </Rollout>
                          <Closed title="摄影机" />
                          <Closed title="灯光" />
                          <Closed title="嵌入的媒体" />
                        </RollBody>
                      </Rollout>
                    </PaneContent>
                    <ScrollTrack><ScrollThumb /></ScrollTrack>
                  </Pane>
                  <DlgFooter>
                    <DlgButton>编辑...</DlgButton>
                    <DlgButton $push>确定</DlgButton>
                    <DlgButton>取消</DlgButton>
                  </DlgFooter>
                </DlgBody>
                <ResizeGrip width="9" height="9" viewBox="0 0 9 9">
                  <path d="M7 1h1v1H7zM4 4h1v1H4zM7 4h1v1H7zM1 7h1v1H1zM4 7h1v1H4zM7 7h1v1H7z" fill="#ededed" />
                </ResizeGrip>
              </Dialog>
            </Viewport>
            <Gutter />
          </ViewRow>
          <BottomStrip>
            <Tick $ml={15} $c="#777" />
            <Tick $ml={124} $c="#111" />
            <Tick $ml={15} $c="#777" />
          </BottomStrip>
        </Right>
      </Body>
    </Page>
  );
}
